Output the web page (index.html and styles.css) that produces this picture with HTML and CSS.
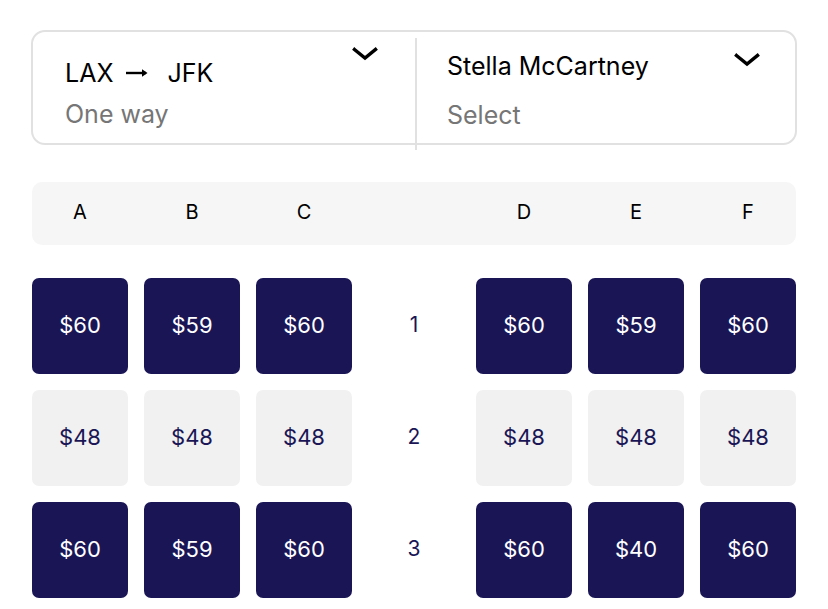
FILE: index.html
```html
<!DOCTYPE html>
<html>
<head>
<meta charset="utf-8">
<link rel="stylesheet" href="styles.css">
</head>
<body>
<div class="page">
  <div class="card">
    <div class="cell cell-route">
      <div class="texts">
        <div class="title">LAX <svg class="arrow" width="24" height="10" viewBox="0 0 24 10"><path d="M1 5H21" stroke="#000" stroke-width="2.4"/><path d="M17 1.2L22.5 5L17 8.8Z" fill="#000"/></svg> JFK</div>
        <div class="sub">One way</div>
      </div>
      <svg class="chev" width="26" height="14" viewBox="0 0 26 14"><path d="M2.5 2.5L13 11L23.5 2.5" fill="none" stroke="#000" stroke-width="3.4" stroke-linecap="square"/></svg>
    </div>
    <div class="cell cell-person">
      <div class="texts">
        <div class="title">Stella McCartney</div>
        <div class="sub">Select</div>
      </div>
      <svg class="chev" width="26" height="14" viewBox="0 0 26 14"><path d="M2.5 2.5L13 11L23.5 2.5" fill="none" stroke="#000" stroke-width="3.4" stroke-linecap="square"/></svg>
    </div>
  </div>

  <div class="grid header">
    <span>A</span><span>B</span><span>C</span><span></span><span>D</span><span>E</span><span>F</span>
  </div>

  <div class="grid seats">
    <div class="seat dark">$60</div><div class="seat dark">$59</div><div class="seat dark">$60</div>
    <div class="rownum">1</div>
    <div class="seat dark">$60</div><div class="seat dark">$59</div><div class="seat dark">$60</div>

    <div class="seat light">$48</div><div class="seat light">$48</div><div class="seat light">$48</div>
    <div class="rownum">2</div>
    <div class="seat light">$48</div><div class="seat light">$48</div><div class="seat light">$48</div>

    <div class="seat dark">$60</div><div class="seat dark">$59</div><div class="seat dark">$60</div>
    <div class="rownum">3</div>
    <div class="seat dark">$60</div><div class="seat dark">$40</div><div class="seat dark">$60</div>
  </div>
</div>
</body>
</html>
```

FILE: styles.css
```css
* { box-sizing: border-box; }
html, body { margin: 0; padding: 0; background: #fff; }
body {
  font-family: "Inter", "Noto Sans", sans-serif;
  color: #000;
  overflow: hidden;
}
.page {
  padding: 30px 31px 0 31px;
}
.card {
  display: flex;
  height: 115px;
  border: 2px solid #e1e1e1;
  border-radius: 14px;
}
.cell {
  flex: 1;
  display: flex;
  justify-content: space-between;
  align-items: flex-start;
}
.cell-route {
  padding: 26px 37px 0 32px;
}
.cell-person {
  margin: 6px 0 -7px 0;
  border-left: 2px solid #e1e1e1;
  padding: 13px 35px 0 30px;
}
.title {
  font-size: 25px;
  line-height: 30px;
  display: flex;
  align-items: center;
}
.arrow { margin: 0 18px 0 12px; }
.sub {
  font-size: 25px;
  line-height: 30px;
  color: #767676;
}
.cell-route .sub { margin-top: 11px; }
.cell-person .sub { margin-top: 19px; }
.cell-route .chev { margin-top: -11px; }
.cell-person .chev { margin-top: 2px; }

.grid {
  display: grid;
  grid-template-columns: 96px 96px 96px 92px 96px 96px 96px;
  column-gap: 16px;
  margin-left: 1px;
  width: 764px;
}
.header {
  margin-top: 37px;
  height: 63px;
  background: #f6f6f6;
  border-radius: 10px;
  align-items: center;
  font-size: 20px;
  padding-bottom: 3px;
}
.header span {
  text-align: center;
}
.seats {
  margin-top: 33px;
  row-gap: 16px;
}
.seat {
  height: 96px;
  border-radius: 7px;
  display: flex;
  align-items: center;
  justify-content: center;
  font-size: 22px;
  padding-bottom: 3px;
}
.dark { background: #1a1656; color: #fff; }
.light { background: #f1f1f1; color: #1a1656; }
.rownum {
  display: flex;
  align-items: center;
  justify-content: center;
  font-size: 21px;
  color: #1a1656;
  padding-bottom: 3px;
}
```
